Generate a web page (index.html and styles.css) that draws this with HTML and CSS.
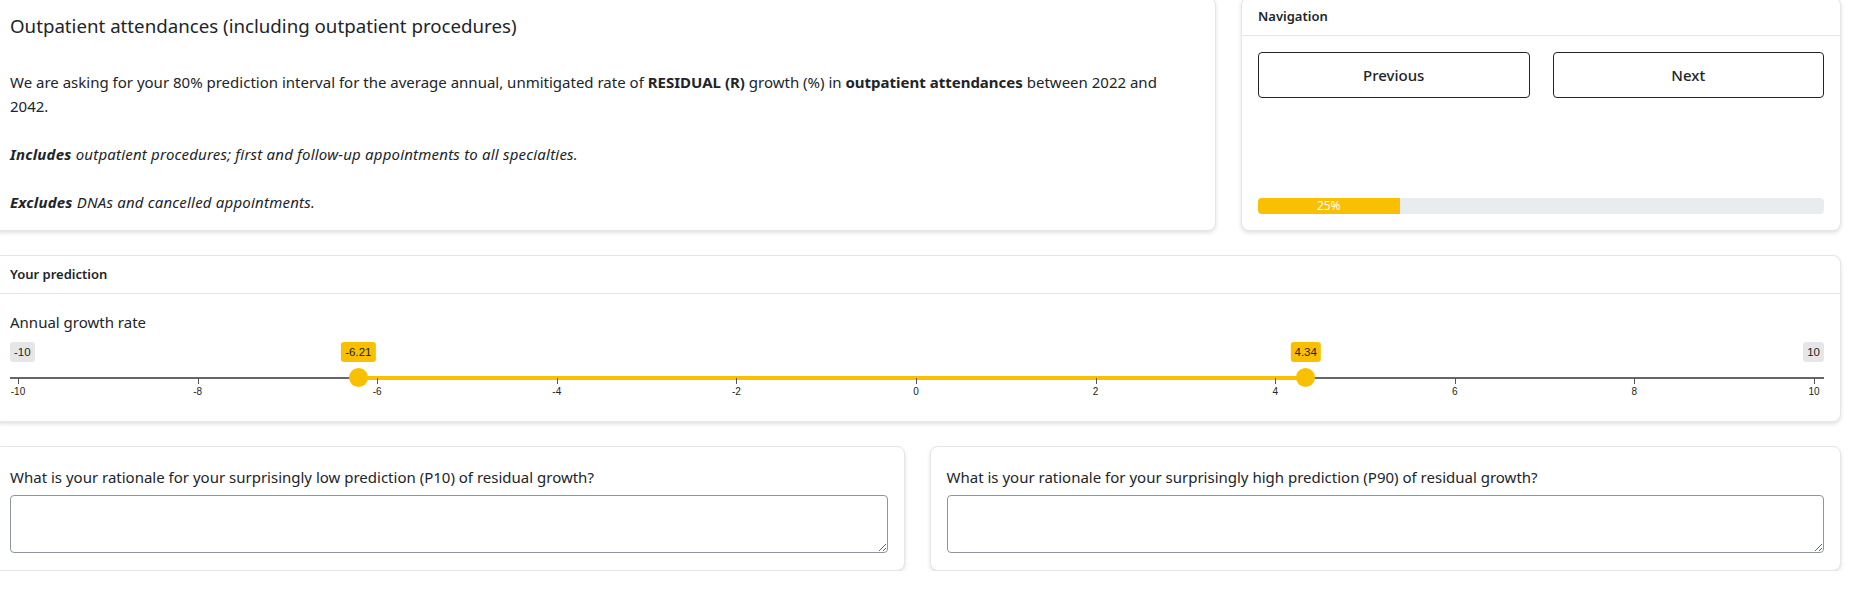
FILE: index.html
```html
<!DOCTYPE html>
<html lang="en">
<head>
<meta charset="utf-8">
<title>Outpatient attendances</title>
<link rel="stylesheet" href="styles.css">
</head>
<body>
<div class="page">
  <div class="row-top">
    <div class="card">
      <div class="card-body desc-body">
        <h5 class="title">Outpatient attendances (including outpatient procedures)</h5>
        <p>We are asking for your 80% prediction interval for the average annual, unmitigated rate of <strong>RESIDUAL (R)</strong> growth (%) in <strong>outpatient attendances</strong> between 2022 and 2042.</p>
        <p><em><strong>Includes</strong> outpatient procedures; first and follow-up appointments to all specialties.</em></p>
        <p class="last"><em><strong>Excludes</strong> DNAs and cancelled appointments.</em></p>
      </div>
    </div>
    <div class="card">
      <div class="card-header">Navigation</div>
      <div class="card-body nav-body">
        <div class="btn-row">
          <button class="btn">Previous</button>
          <button class="btn">Next</button>
        </div>
        <div class="progress">
          <div class="progress-bar" style="width:25%">25%</div>
        </div>
      </div>
    </div>
  </div>

  <div class="card">
    <div class="card-header">Your prediction</div>
    <div class="card-body pred-body">
      <label class="field-label">Annual growth rate</label>
      <div class="slider">
        <span class="lbl lbl-min">-10</span>
        <span class="lbl lbl-max">10</span>
        <div class="line"></div>
        <div class="scale">
          <div class="bar" style="left:18.95%;width:52.75%"></div>
          <span class="lbl lbl-val" style="left:18.95%">-6.21</span>
          <span class="lbl lbl-val" style="left:71.7%">4.34</span>
          <span class="handle" style="left:18.95%"></span>
          <span class="handle" style="left:71.7%"></span>
          <span class="tick" style="left:0%"><i></i><b>-10</b></span>
          <span class="tick" style="left:10%"><i></i><b>-8</b></span>
          <span class="tick" style="left:20%"><i></i><b>-6</b></span>
          <span class="tick" style="left:30%"><i></i><b>-4</b></span>
          <span class="tick" style="left:40%"><i></i><b>-2</b></span>
          <span class="tick" style="left:50%"><i></i><b>0</b></span>
          <span class="tick" style="left:60%"><i></i><b>2</b></span>
          <span class="tick" style="left:70%"><i></i><b>4</b></span>
          <span class="tick" style="left:80%"><i></i><b>6</b></span>
          <span class="tick" style="left:90%"><i></i><b>8</b></span>
          <span class="tick" style="left:100%"><i></i><b>10</b></span>
        </div>
      </div>
    </div>
  </div>

  <div class="row-bottom">
    <div class="card">
      <div class="card-body ta-body">
        <label class="ta-label">What is your rationale for your surprisingly low prediction (P10) of residual growth?</label>
        <textarea class="ta"></textarea>
      </div>
    </div>
    <div class="card">
      <div class="card-body ta-body">
        <label class="ta-label">What is your rationale for your surprisingly high prediction (P90) of residual growth?</label>
        <textarea class="ta"></textarea>
      </div>
    </div>
  </div>
</div>
</body>
</html>
```

FILE: styles.css
```css
* { box-sizing: border-box; }
html, body { margin: 0; padding: 0; background: #fff; overflow: hidden; }
body {
  font-family: "Noto Sans", "Open Sans", sans-serif;
  font-size: 15px;
  line-height: 24px;
  color: #212529;
}
.page {
  width: 1848px;
  margin: -3px 0 0 -7px;
  display: flex;
  flex-direction: column;
  gap: 24px;
}
.row-top {
  display: grid;
  grid-template-columns: 1223px 1fr;
  gap: 25px;
}
.row-bottom {
  display: grid;
  grid-template-columns: 1fr 1fr;
  gap: 25px;
}
.card {
  background: #fff;
  border: 1px solid #e6e6e6;
  border-radius: 8px;
  box-shadow: 0 2px 4px rgba(0,0,0,0.12);
  display: flex;
  flex-direction: column;
}
.card-header {
  padding: 8px 16px;
  line-height: 21px;
  font-size: 13px;
  font-weight: 600;
  border-bottom: 1px solid #e6e6e6;
}
.card-body { padding: 16px; flex: 1; }
.title {
  margin: 0 0 32px;
  font-size: 18.7px;
  font-weight: 400;
  line-height: 24px;
}
.desc-body p { margin: 0 0 24px; }
.desc-body p.last { margin-bottom: 0; }
.desc-body strong { font-weight: 700; }
.desc-body em { letter-spacing: 0.2px; }

.nav-body { display: flex; flex-direction: column; }
.btn-row {
  display: grid;
  grid-template-columns: 1fr 1fr;
  gap: 23px;
}
.btn {
  height: 46px;
  background: #fff;
  border: 1px solid #212529;
  border-radius: 4px;
  font-family: inherit;
  font-size: 15px;
  font-weight: 500;
  color: #212529;
}
.progress {
  margin-top: auto;
  height: 16px;
  background: #e9ecef;
  border-radius: 4px;
  overflow: hidden;
  display: flex;
}
.progress-bar {
  background: #f9c002;
  color: #fff;
  font-size: 12px;
  line-height: 16px;
  text-align: center;
}

.pred-body { padding: 16px 16px 17px; }
.field-label {
  display: block;
  font-size: 15px;
  margin-bottom: 8px;
}
.slider {
  position: relative;
  height: 62px;
  font-family: "Liberation Sans", Arial, sans-serif;
}
.lbl {
  position: absolute;
  top: 0;
  font-size: 11.5px;
  line-height: 16px;
  padding: 2px 4px;
  border-radius: 3px;
  color: #222;
  white-space: nowrap;
}
.lbl-min { left: 0; background: #e6e6e6; }
.lbl-max { right: 0; background: #e6e6e6; }
.lbl-val { background: #f9c002; transform: translateX(-50%); }
.line {
  position: absolute;
  left: 0; right: 0;
  top: 35px;
  height: 2px;
  background: #666;
}
.scale {
  position: absolute;
  left: 8px; right: 10px;
  top: 0; bottom: 0;
}
.bar {
  position: absolute;
  top: 34px;
  height: 4px;
  background: #f9c002;
}
.handle {
  position: absolute;
  top: 26px;
  width: 19px;
  height: 19px;
  margin-left: -9.5px;
  border-radius: 50%;
  background: #f9c002;
}
.tick {
  position: absolute;
  top: 36px;
  width: 0;
}
.tick i {
  position: absolute;
  left: 0;
  top: 0;
  width: 1px;
  height: 6px;
  background: #555;
}
.tick b {
  position: absolute;
  top: 8px;
  left: 0;
  transform: translateX(-50%);
  font-weight: 400;
  font-size: 10px;
  line-height: 12px;
  color: #222;
}

.ta-body { padding: 18px 16px 17px; }
.ta-label {
  display: block;
  font-size: 15px;
  line-height: 24px;
  margin-bottom: 6px;
}
.ta {
  display: block;
  width: 100%;
  height: 58px;
  border: 1px solid #8e959c;
  border-radius: 4px;
  resize: vertical;
  font-family: inherit;
}
```
